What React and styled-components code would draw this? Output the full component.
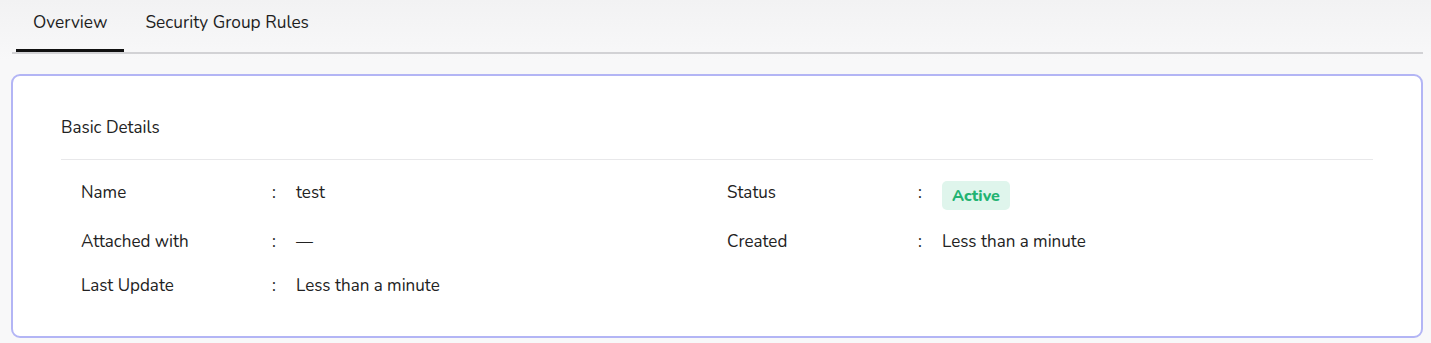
import React from "react";
import styled, { createGlobalStyle } from "styled-components";

const Global = createGlobalStyle`
  html, body { margin: 0; padding: 0; }
  body {
    background: #f8f8f9;
    font-family: "Nunito", Lato, "Open Sans", sans-serif;
    color: #222;
    font-size: 17px;
  }
`;

const Page = styled.div`
  width: 1431px;
  height: 343px;
  box-sizing: border-box;
  padding: 0 8px 0 11px;
  background: linear-gradient(180deg, #f2f2f3 0%, #f8f8f9 60px, #f8f8f9 100%);
  overflow: hidden;
`;

const TabBar = styled.div`
  display: flex;
  gap: 4px;
  margin-left: 1px;
  padding-left: 4px;
  border-bottom: 2px solid #d2d2d5;
  height: 54px;
  box-sizing: border-box;
`;

const Tab = styled.div`
  padding: 0 17px 3px;
  height: 100%;
  display: flex;
  align-items: center;
  box-sizing: border-box;
  font-size: 17.3px;
  line-height: 24px;
  color: #1e1e1e;
  border-bottom: 3px solid ${(p) => (p.$active ? "#111" : "transparent")};
  margin-bottom: -2px;
`;

const Card = styled.section`
  margin-top: 20px;
  background: #fff;
  border: 2px solid #b3b5f5;
  border-radius: 9px;
  padding: 40px 48px 37px;
  box-sizing: border-box;
  height: 264px;
`;

const CardTitle = styled.div`
  font-size: 17px;
  line-height: 24px;
  color: #222;
  padding-bottom: 19px;
  border-bottom: 1px solid #e8e8ea;
`;

const Grid = styled.div`
  display: grid;
  grid-template-columns: 646px 1fr;
  row-gap: 20px;
  padding: 21px 20px 0;
`;

const Field = styled.div`
  display: grid;
  grid-template-columns: 191px 24px 1fr;
  align-items: start;
  line-height: 24px;
  font-size: 17px;
  color: #222;
`;

const Label = styled.span``;
const Colon = styled.span``;
const Value = styled.span`
  min-height: 24px;
`;

const Badge = styled.span`
  display: inline-flex;
  align-items: center;
  height: 29px;
  padding: 0 10px;
  border-radius: 5px;
  background: #dff5ec;
  color: #22b372;
  font-weight: 800;
  font-size: 16px;
`;

const fields = [
  { label: "Name", value: "test" },
  { label: "Status", value: <Badge>Active</Badge> },
  { label: "Attached with", value: "—" },
  { label: "Created", value: "Less than a minute" },
  { label: "Last Update", value: "Less than a minute" },
];

export default function App() {
  return (
    <>
      <Global />
      <Page>
        <TabBar>
          <Tab $active>Overview</Tab>
          <Tab>Security Group Rules</Tab>
        </TabBar>
        <Card>
          <CardTitle>Basic Details</CardTitle>
          <Grid>
            {fields.map((f) => (
              <Field key={f.label}>
                <Label>{f.label}</Label>
                <Colon>:</Colon>
                <Value>{f.value}</Value>
              </Field>
            ))}
          </Grid>
        </Card>
      </Page>
    </>
  );
}
